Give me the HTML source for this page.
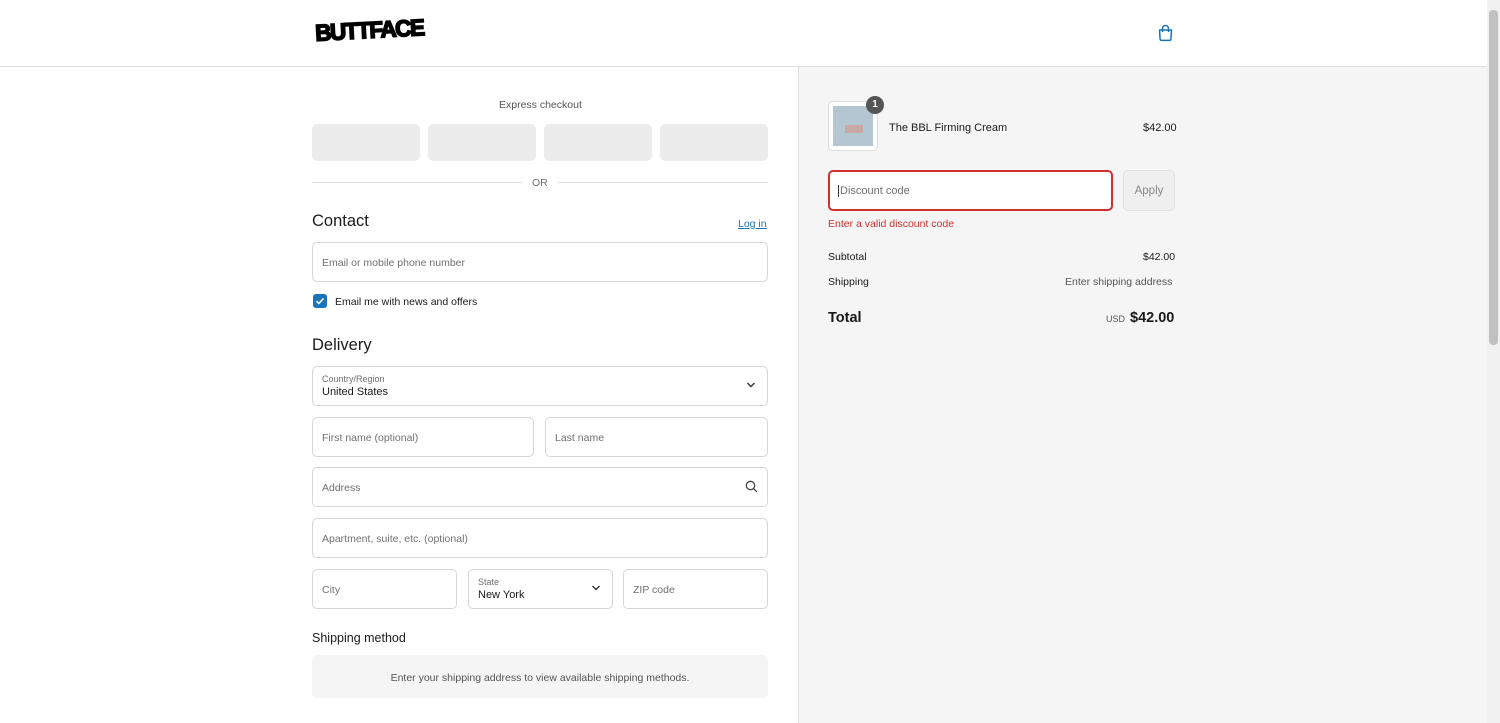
<!DOCTYPE html>
<html><head><meta charset="utf-8"><style>
*{box-sizing:border-box;margin:0;padding:0}
body{width:1500px;height:723px;overflow:hidden;font-family:"Liberation Sans",sans-serif;color:#1a1a1a;background:#fff;position:relative}
.hdr{height:67px;border-bottom:1px solid #dedede;position:relative}
.logo{position:absolute;left:314px;top:17px;font-weight:900;font-size:23px;letter-spacing:-1.5px;transform:rotate(-3deg) scaleX(0.98);color:#000;-webkit-text-stroke:1.6px #000}
.right{position:absolute;left:798px;top:67px;width:689px;height:656px;background:#f5f5f5;border-left:1px solid #dedede}
.sb{position:absolute;right:0;top:0;width:13px;height:723px;background:#f1f1f1}
.sb div{position:absolute;left:2px;top:10px;width:9px;height:335px;background:#c1c1c1;border-radius:4px}
.abs{position:absolute}
.ex{top:124px;height:37px;width:108px;background:#ececec;border-radius:5px}
.in{position:absolute;border:1px solid #d6d6d6;border-radius:5px;height:40px;background:#fff;font-size:10.5px;color:#707070;padding:1px 9px 0;display:flex;align-items:center}
h2{position:absolute;font-size:16.5px;font-weight:500}
.t{position:absolute;font-size:10.5px}
</style></head><body>
<div class="hdr">
<div class="logo">BUTTFACE</div>
<svg class="abs" style="left:1157px;top:24px" width="17" height="18" viewBox="0 0 17 18"><path d="M2.5 6h12l-.6 9a1.5 1.5 0 0 1-1.5 1.4H4.6A1.5 1.5 0 0 1 3.1 15z" fill="none" stroke="#1a73b8" stroke-width="1.5" stroke-linejoin="round"/><path d="M5.5 8V4.5a3 3 0 0 1 6 0V8" fill="none" stroke="#1a73b8" stroke-width="1.5"/></svg>
</div>
<div class="t" style="left:499px;top:99px;color:#555">Express checkout</div>
<div class="abs ex" style="left:312px"></div><div class="abs ex" style="left:428px"></div><div class="abs ex" style="left:544px"></div><div class="abs ex" style="left:660px"></div>
<div class="abs" style="left:312px;top:182px;width:210px;height:1px;background:#dedede"></div>
<div class="abs" style="left:558px;top:182px;width:210px;height:1px;background:#dedede"></div>
<div class="t" style="left:532px;top:177px;color:#707070">OR</div>
<h2 style="left:312px;top:212px">Contact</h2>
<div class="t" style="left:738px;top:218px;color:#1a73b8;text-decoration:underline">Log in</div>
<div class="in" style="left:312px;top:242px;width:456px">Email or mobile phone number</div>
<div class="abs" style="left:313px;top:294px;width:14px;height:14px;background:#1a73b8;border-radius:3px"><svg width="14" height="14"><path d="M3.5 7.2l2.3 2.3 4.7-5" stroke="#fff" stroke-width="1.6" fill="none"/></svg></div>
<div class="t" style="left:335px;top:296px;color:#1a1a1a">Email me with news and offers</div>
<h2 style="left:312px;top:336px">Delivery</h2>
<div class="in" style="left:312px;top:366px;width:456px;display:block;padding-top:7px"><div style="font-size:9px">Country/Region</div><div style="font-size:11px;color:#1a1a1a;margin-top:2px">United States</div></div>
<svg class="abs" style="left:746px;top:381px" width="10" height="8"><path d="M1.5 2l3.5 3.5L8.5 2" stroke="#333" stroke-width="1.4" fill="none"/></svg>
<div class="in" style="left:312px;top:417px;width:222px">First name (optional)</div>
<div class="in" style="left:545px;top:417px;width:223px">Last name</div>
<div class="in" style="left:312px;top:467px;width:456px">Address</div>
<svg class="abs" style="left:745px;top:480px" width="13" height="13"><circle cx="5.5" cy="5.5" r="4.2" stroke="#444" stroke-width="1.3" fill="none"/><path d="M8.6 8.6l3.3 3.3" stroke="#444" stroke-width="1.3"/></svg>
<div class="in" style="left:312px;top:518px;width:456px">Apartment, suite, etc. (optional)</div>
<div class="in" style="left:312px;top:569px;width:145px">City</div>
<div class="in" style="left:468px;top:569px;width:145px;display:block;padding-top:7px"><div style="font-size:9px">State</div><div style="font-size:11px;color:#1a1a1a;margin-top:2px">New York</div></div>
<svg class="abs" style="left:591px;top:584px" width="10" height="8"><path d="M1.5 2l3.5 3.5L8.5 2" stroke="#333" stroke-width="1.4" fill="none"/></svg>
<div class="in" style="left:623px;top:569px;width:145px">ZIP code</div>
<div class="abs" style="left:312px;top:631px;font-size:12.5px;font-weight:500">Shipping method</div>
<div class="abs" style="left:312px;top:655px;width:456px;height:43px;background:#f5f5f5;border-radius:5px;font-size:10.5px;color:#555;display:flex;align-items:center;justify-content:center;padding-top:2px">Enter your shipping address to view available shipping methods.</div>

<div class="right"></div>
<div class="abs" style="left:828px;top:101px;width:50px;height:50px;border:1px solid #ddd;border-radius:5px;background:#fff;padding:4px"><div style="width:100%;height:100%;background:#b4c6d2;position:relative"><div style="position:absolute;left:12px;top:19px;width:18px;height:8px;background:#c9a9a5"></div></div></div>
<div class="abs" style="left:866px;top:96px;width:18px;height:18px;border-radius:50%;background:#555;color:#fff;font-size:10px;font-weight:bold;text-align:center;line-height:18px">1</div>
<div class="t" style="left:889px;top:122px;font-size:11px">The BBL Firming Cream</div>
<div class="t" style="left:1143px;top:122px;font-size:11px">$42.00</div>
<div class="abs" style="left:828px;top:170px;width:285px;height:41px;border:2px solid #d32f2f;border-radius:5px;background:#fff;font-size:11px;color:#707070;padding:1px 8px 0;display:flex;align-items:center"><span style="border-left:1px solid #333;padding-left:1px">Discount code</span></div>
<div class="abs" style="left:1123px;top:170px;width:52px;height:41px;border:1px solid #e2e2e2;border-radius:5px;background:#efefef;font-size:11.5px;color:#888;display:flex;align-items:center;justify-content:center">Apply</div>
<div class="t" style="left:828px;top:218px;color:#d32f2f">Enter a valid discount code</div>
<div class="t" style="left:828px;top:251px">Subtotal</div>
<div class="t" style="left:1143px;top:251px">$42.00</div>
<div class="t" style="left:828px;top:276px">Shipping</div>
<div class="t" style="left:1065px;top:276px;color:#555">Enter shipping address</div>
<div class="abs" style="left:828px;top:310px;font-size:14.5px;font-weight:bold">Total</div>
<div class="t" style="left:1106px;top:314px;font-size:9px;color:#555">USD</div>
<div class="abs" style="left:1130px;top:310px;font-size:14.5px;font-weight:bold">$42.00</div>
<div class="sb"><div></div></div>
</body></html>
